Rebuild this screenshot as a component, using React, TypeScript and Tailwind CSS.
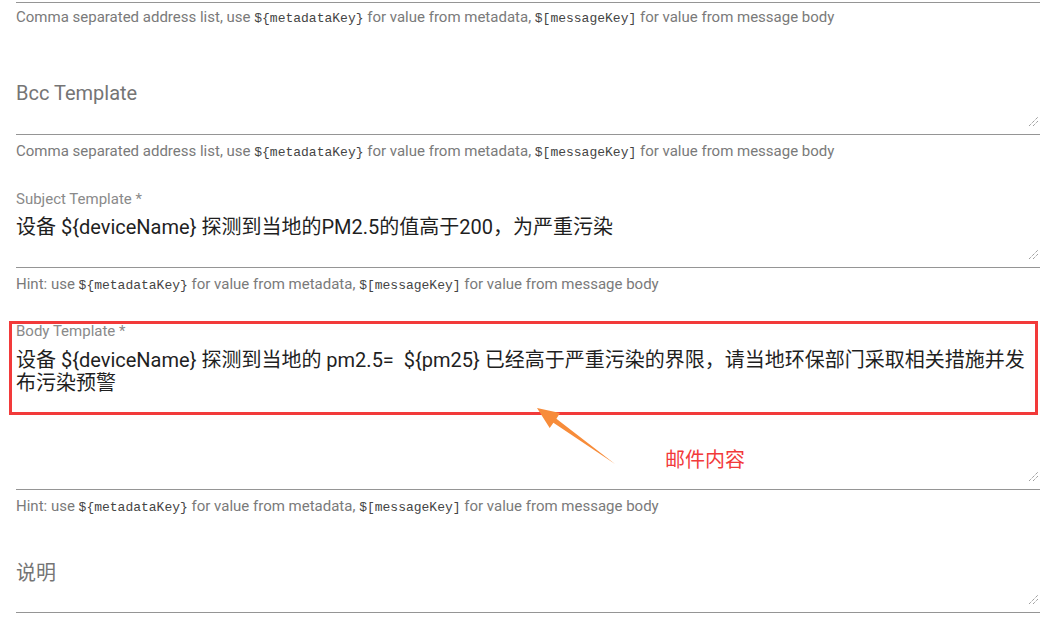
import React from 'react';

const sans = "font-['Roboto','Noto_Sans_CJK_SC',sans-serif]";

const Mono: React.FC<{ children: React.ReactNode }> = ({ children }) => (
  <span className="font-['Liberation_Mono',monospace] text-[13px] leading-[18px] text-[#444]">{children}</span>
);

const Hint: React.FC<{ kind: 'comma' | 'hint'; className?: string }> = ({ kind, className = '' }) => (
  <p className={`h-[18px] text-[15px] leading-[18px] text-[#7a7a7a] whitespace-nowrap ${className}`}>
    {kind === 'comma' ? 'Comma separated address list, use ' : 'Hint: use '}
    <Mono>{'${metadataKey}'}</Mono> for value from metadata, <Mono>{'$[messageKey]'}</Mono> for value from message body
  </p>
);

const ResizeHandle = () => (
  <svg className="absolute right-[1px] bottom-[7px]" width="11" height="11" viewBox="0 0 11 11">
    <path d="M1 10 L10 1 M5 10 L10 5" stroke="#777" strokeWidth="1" strokeDasharray="1 1" />
  </svg>
);

const Line = () => <div className="border-t border-[#959595]" />;

export default function App() {
  return (
    <div className={`relative w-[1049px] h-[635px] overflow-hidden bg-white ${sans}`}>
      <div className="pl-4 pr-[9px]">
        <div className="h-[2px]" />
        <Line />
        <Hint kind="comma" className="mt-[5px]" />

        {/* Bcc Template */}
        <div className="relative h-[108px] pt-[55px]">
          <div className="text-[20px] leading-[24px] text-[#757575]">Bcc Template</div>
          <ResizeHandle />
        </div>
        <Line />
        <Hint kind="comma" className="mt-[7px]" />

        {/* Subject Template */}
        <div className="relative h-[107px] pt-[31px]">
          <div className="text-[15px] leading-[17px] text-[#8a8a8a]">Subject Template *</div>
          <div className="mt-[7px] text-[20px] leading-[24px] text-[#1f1f1f]">
            设备 ${'{deviceName}'} 探测到当地的PM2.5的值高于200，为严重污染
          </div>
          <ResizeHandle />
        </div>
        <Line />
        <Hint kind="hint" className="mt-[7px]" />

        {/* Body Template */}
        <div className="relative h-[196px] pt-[30px]">
          <div className="text-[15px] leading-[17px] text-[#8a8a8a]">Body Template *</div>
          <div className="mt-[9px] text-[20px] leading-[23px] text-[#1f1f1f] whitespace-nowrap">
            设备 ${'{deviceName}'} 探测到当地的 pm2.5=&nbsp; ${'{pm25}'} 已经高于严重污染的界限，请当地环保部门采取相关措施并发
            <br />
            布污染预警
          </div>
          <ResizeHandle />
        </div>
        <Line />
        <Hint kind="hint" className="mt-[7px]" />

        {/* 说明 */}
        <div className="relative h-[97px] pt-[46px]">
          <div className="text-[20px] leading-[24px] text-[#757575]">说明</div>
          <ResizeHandle />
        </div>
        <Line />
      </div>

      {/* annotation overlay */}
      <div className="absolute left-[9px] top-[321px] w-[1029px] h-[94px] border-[3px] border-[#f23a3a]" />
      <svg className="absolute left-0 top-0" width="1049" height="635">
        <polygon
          points="537,408 560,413 556.4,418.8 615,464 553.4,422.8 549.7,428.1"
          fill="#f78c3a"
        />
      </svg>
      <div className="absolute left-[665px] top-[448px] text-[20px] leading-[24px] text-[#f23a3a]">邮件内容</div>
    </div>
  );
}
